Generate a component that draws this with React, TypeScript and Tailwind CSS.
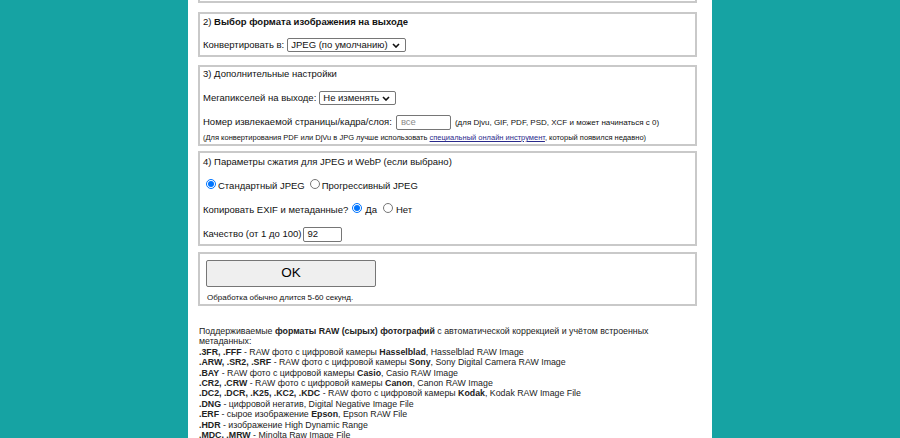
import React from 'react';

const Chevron = () => (
  <svg width="8" height="5" viewBox="0 0 8 5" className="shrink-0">
    <path d="M1 1 L4 4 L7 1" fill="none" stroke="#111" strokeWidth="1.6" />
  </svg>
);

const Select = ({ value, width }: { value: string; width: string }) => (
  <span
    className={`inline-flex items-center justify-between h-[14px] border border-[#767676] rounded-[2px] bg-white pl-[3px] pr-[5px] text-[9.5px] leading-none ${width}`}
  >
    <span>{value}</span>
    <Chevron />
  </span>
);

const Radio = ({ checked }: { checked?: boolean }) =>
  checked ? (
    <span className="inline-block w-[10px] h-[10px] rounded-full border border-[#0075ff] p-[1px] bg-white shrink-0">
      <span className="block w-full h-full rounded-full bg-[#0075ff]" />
    </span>
  ) : (
    <span className="inline-block w-[10px] h-[10px] rounded-full border border-[#767676] bg-white shrink-0" />
  );

const Box = ({ className, children }: { className?: string; children: React.ReactNode }) => (
  <div className={`w-[499px] border-2 border-[#c9c9c9] pl-[3px] ${className ?? ''}`}>{children}</div>
);

const formats: [string, string, string?, string?][] = [
  ['.3FR, .FFF', ' - RAW фото с цифровой камеры ', 'Hasselblad', ', Hasselblad RAW Image'],
  ['.ARW, .SR2, .SRF', ' - RAW фото с цифровой камеры ', 'Sony', ', Sony Digital Camera RAW Image'],
  ['.BAY', ' - RAW фото с цифровой камеры ', 'Casio', ', Casio RAW Image'],
  ['.CR2, .CRW', ' - RAW фото с цифровой камеры ', 'Canon', ', Canon RAW Image'],
  ['.DC2, .DCR, .K25, .KC2, .KDC', ' - RAW фото с цифровой камеры ', 'Kodak', ', Kodak RAW Image File'],
  ['.DNG', ' - цифровой негатив, Digital Negative Image File'],
  ['.ERF', ' - сырое изображение ', 'Epson', ', Epson RAW File'],
  ['.HDR', ' - изображение High Dynamic Range'],
  ['.MDC, .MRW', ' - Minolta Raw Image File'],
];

export default function App() {
  return (
    <div
      className="min-h-screen bg-[#16a3a3] flex justify-center"
      style={{ fontFamily: '"Liberation Sans", Arial, sans-serif' }}
    >
      <div className="w-[524px] bg-white pl-[10px] text-[9.5px] text-[#111]">
        {/* tail of section 1 */}
        <div className="w-[499px] h-[3px] border-x-2 border-b-2 border-[#c9c9c9]" />

        <Box className="mt-[9px] pb-[3px]">
          <div className="leading-[15px]">
            2) <b>Выбор формата изображения на выходе</b>
          </div>
          <div className="mt-[9px] flex items-center gap-[3px] h-[14px]">
            <span>Конвертировать в:</span>
            <Select value="JPEG (по умолчанию)" width="w-[119px]" />
          </div>
        </Box>

        <Box className="mt-[8px] pb-[1px]">
          <div className="leading-[14px]">3) Дополнительные настройки</div>
          <div className="mt-[10px] flex items-center gap-[3px] h-[14px]">
            <span>Мегапикселей на выходе:</span>
            <Select value="Не изменять" width="w-[77px]" />
          </div>
          <div className="mt-[10px] flex items-center h-[15px]">
            <span>Номер извлекаемой страницы/кадра/слоя:</span>
            <span className="ml-[4px] inline-flex items-center w-[55px] h-[15px] border border-[#767676] rounded-[2px] pl-[4px] text-[#8a8a8a]">
              все
            </span>
            <span className="ml-[4px] text-[8px]">(для Djvu, GIF, PDF, PSD, XCF и может начинаться с 0)</span>
          </div>
          <div className="mt-[3px] leading-[10px] text-[7.5px]">
            (Для конвертирования PDF или DjVu в JPG лучше использовать{' '}
            <a href="#" className="underline text-[#2b2b8c]">специальный онлайн инструмент</a>, который появился недавно)
          </div>
        </Box>

        <Box className="mt-[5px] pt-[2px] pb-[2px]">
          <div className="leading-[14px]">4) Параметры сжатия для JPEG и WebP (если выбрано)</div>
          <div className="mt-[10px] flex items-center h-[14px]">
            <span className="ml-[3px]"><Radio checked /></span>
            <span className="ml-[2px]">Стандартный JPEG</span>
            <span className="ml-[5px]"><Radio /></span>
            <span className="ml-[2px]">Прогрессивный JPEG</span>
          </div>
          <div className="mt-[10px] flex items-center h-[14px]">
            <span>Копировать EXIF и метаданные?</span>
            <span className="ml-[4px]"><Radio checked /></span>
            <span className="ml-[3px]">Да</span>
            <span className="ml-[6px]"><Radio /></span>
            <span className="ml-[3px]">Нет</span>
          </div>
          <div className="mt-[10px] flex items-center h-[15px]">
            <span>Качество (от 1 до 100)</span>
            <span className="ml-[2px] inline-flex items-center w-[39px] h-[15px] border border-[#767676] rounded-[2px] pl-[3px]">
              92
            </span>
          </div>
        </Box>

        <Box className="mt-[6px] pt-[6px] pb-[1px] pl-[6px]">
          <button className="w-[170px] h-[27px] bg-[#efefef] border border-[#767676] rounded-[2px] text-[13.5px] text-black">
            OK
          </button>
          <div className="mt-[6px] leading-[10px] text-[8px] pl-[1px]">Обработка обычно длится 5-60 секунд.</div>
        </Box>

        <div className="mt-[20px] w-[480px] text-[8.8px] leading-[10.4px] text-[#222] pl-[1px]">
          <p>
            Поддерживаемые <b>форматы RAW (сырых) фотографий</b> с автоматической коррекцией и учётом встроенных
            метаданных:
          </p>
          {formats.map(([ext, mid, brand, tail]) => (
            <div key={ext}>
              <b>{ext}</b>
              {mid}
              {brand && <b>{brand}</b>}
              {tail}
            </div>
          ))}
        </div>
      </div>
    </div>
  );
}
